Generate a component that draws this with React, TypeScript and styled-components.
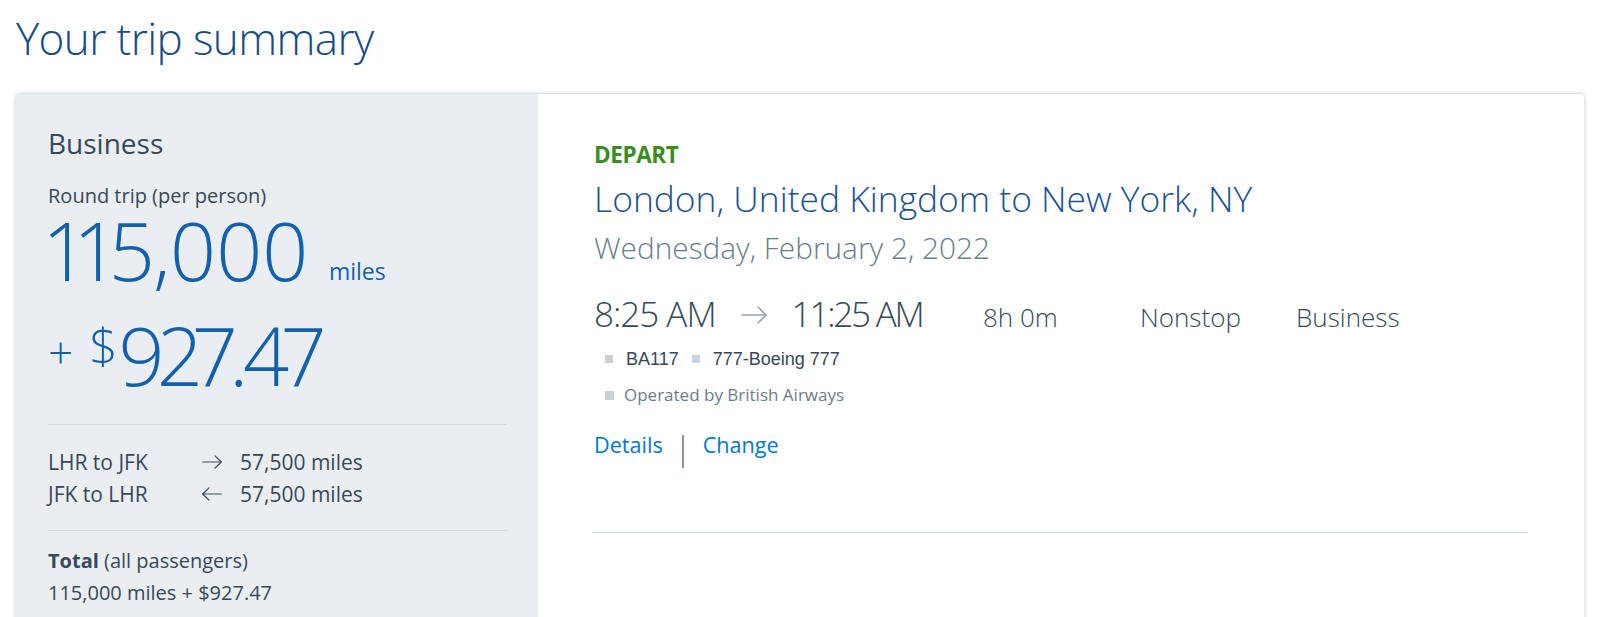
import React from "react";
import styled, { createGlobalStyle } from "styled-components";

const GlobalStyle = createGlobalStyle`
  html, body { margin: 0; padding: 0; background: #ffffff; }
  body { font-family: "Open Sans", "Noto Sans", sans-serif; color: #36495a; }
  * { box-sizing: border-box; }
`;

const Page = styled.main`
  padding: 12px 16px 0;
`;

const Title = styled.h1`
  margin: 0 0 28px;
  font-size: 44px;
  line-height: 1.2;
  font-weight: 300;
  letter-spacing: -0.6px;
  color: #174b86;
`;

const Card = styled.section`
  display: grid;
  grid-template-columns: 522px 1fr;
  border-radius: 4px;
  border-top: 1px solid #dde3e8;
  box-shadow: 0 1px 4px rgba(30, 45, 60, 0.28);
  overflow: hidden;
`;

const FareColumn = styled.aside`
  background: #eaeef1;
  padding: 33px 31px 48px 32px;
  display: flex;
  flex-direction: column;
`;

const CabinName = styled.div`
  font-size: 28px;
  line-height: 1.2;
  font-weight: 400;
  color: #36495a;
`;

const FareLabel = styled.div`
  margin-top: 25px;
  font-size: 20px;
  line-height: 22px;
  color: #36495a;
`;

const AmountLine = styled.div<{ $top: number }>`
  display: flex;
  align-items: flex-start;
  margin-top: ${(p) => p.$top}px;
`;

const BigAmount = styled.span<{ $spacing: number }>`
  font-size: 81px;
  line-height: 81px;
  font-weight: 300;
  letter-spacing: ${(p) => p.$spacing}px;
  font-variant-numeric: proportional-nums;
  color: #1260b0;
`;

const Unit = styled.span`
  font-size: 23px;
  line-height: 1;
  margin: 51px 0 0 21px;
  color: #1260b0;
`;

const Plus = styled.span`
  font-size: 44px;
  line-height: 44px;
  font-weight: 300;
  color: #1260b0;
  margin: 16px 16px 0 0;
`;

const Currency = styled.span`
  font-size: 50px;
  line-height: 50px;
  font-weight: 300;
  color: #1260b0;
  margin: 6px 1px 0 0;
`;

const Rule = styled.hr<{ $top: number }>`
  border: 0;
  height: 1px;
  background: #d0d9df;
  margin: ${(p) => p.$top}px 0 0;
`;

const LegGrid = styled.div`
  display: grid;
  grid-template-columns: 154px 38px auto;
  align-items: center;
  margin-top: 21px;
  font-size: 21px;
  line-height: 32px;
  color: #36495a;
`;

const LegArrow = styled.svg`
  width: 20px;
  height: 14px;
  display: block;
`;

const TotalBlock = styled.div`
  margin-top: 14px;
  font-size: 20px;
  line-height: 32px;
  color: #36495a;
  b { font-weight: 700; }
`;

const FlightColumn = styled.div`
  padding: 47px 56px 40px;
  display: flex;
  flex-direction: column;
`;

const Direction = styled.div`
  font-size: 22.5px;
  line-height: 1.2;
  font-weight: 700;
  letter-spacing: -0.4px;
  color: #3b8c21;
`;

const Route = styled.div`
  margin-top: 9px;
  font-size: 35.4px;
  line-height: 1.2;
  font-weight: 300;
  color: #1b5390;
`;

const DateLine = styled.div`
  margin-top: 11px;
  font-size: 29.8px;
  line-height: 1.2;
  font-weight: 300;
  color: #6b7d8b;
`;

const TimesGrid = styled.div`
  margin-top: 27px;
  display: grid;
  grid-template-columns: 389px 157px 156px auto;
  align-items: baseline;
`;

const TimesCell = styled.div`
  display: flex;
  align-items: center;
  gap: 25px;
`;

const Time = styled.span<{ $spacing: number }>`
  font-size: 35px;
  line-height: 1.2;
  font-weight: 300;
  letter-spacing: ${(p) => p.$spacing}px;
  color: #36495a;
`;

const TimeArrow = styled.svg`
  width: 26px;
  height: 18px;
  display: block;
  margin-top: 2px;
`;

const Meta = styled.span`
  font-size: 26px;
  font-weight: 300;
  color: #36495a;
`;

const InfoLine = styled.div<{ $top: number; $gap: number }>`
  margin-top: ${(p) => p.$top}px;
  padding-left: 11px;
  display: flex;
  align-items: center;
  gap: ${(p) => p.$gap}px;
  line-height: 24px;
`;

const Square = styled.span<{ $size: number }>`
  width: ${(p) => p.$size}px;
  height: ${(p) => p.$size}px;
  background: #c9d1d7;
  flex: none;
`;

const InfoText = styled.span<{ $muted?: boolean }>`
  font-family: ${(p) =>
    p.$muted ? `"Open Sans", sans-serif` : `"Liberation Sans", Arial, sans-serif`};
  font-size: ${(p) => (p.$muted ? 17 : 18)}px;
  color: ${(p) => (p.$muted ? "#6b7d8b" : "#36495a")};
`;

const Links = styled.div`
  margin-top: 25px;
  display: flex;
  align-items: flex-start;
  gap: 19px;
`;

const LinkText = styled.a`
  font-size: 21.6px;
  line-height: 1.2;
  color: #0078d2;
  text-decoration: none;
`;

const LinkBar = styled.span`
  width: 2px;
  height: 33px;
  margin-top: 3px;
  background: #8d979f;
`;

const BottomRule = styled.hr`
  border: 0;
  height: 1px;
  background: #d0d9df;
  margin: 64px 0 0 -2px;
`;

const Arrow = ({ dir, as: C, color }: { dir: "left" | "right"; as: typeof LegArrow; color: string }) => {
  const right = dir === "right";
  return (
    <C viewBox="0 0 26 18" fill="none" stroke={color} strokeWidth={1.6} strokeLinecap="round" strokeLinejoin="round">
      <path d="M1 9h24" />
      {right ? <path d="M17 1l8 8-8 8" /> : <path d="M9 1L1 9l8 8" />}
    </C>
  );
};

const legs = [
  { label: "LHR to JFK", dir: "right" as const, miles: "57,500 miles" },
  { label: "JFK to LHR", dir: "left" as const, miles: "57,500 miles" },
];

export default function App() {
  return (
    <>
      <GlobalStyle />
      <Page>
        <Title>Your trip summary</Title>
        <Card>
          <FareColumn>
            <CabinName>Business</CabinName>
            <FareLabel>Round trip (per person)</FareLabel>
            <AmountLine $top={2}>
              <BigAmount $spacing={-0.8}>115,000</BigAmount>
              <Unit>miles</Unit>
            </AmountLine>
            <AmountLine $top={24}>
              <Plus>+</Plus>
              <Currency>$</Currency>
              <BigAmount $spacing={-6.3}>927.47</BigAmount>
            </AmountLine>
            <Rule $top={29} />
            <LegGrid>
              {legs.map((l) => (
                <React.Fragment key={l.label}>
                  <span>{l.label}</span>
                  <Arrow dir={l.dir} as={LegArrow} color="#36495a" />
                  <span>{l.miles}</span>
                </React.Fragment>
              ))}
            </LegGrid>
            <Rule $top={20} />
            <TotalBlock>
              <div>
                <b>Total</b> (all passengers)
              </div>
              <div>115,000 miles + $927.47</div>
            </TotalBlock>
          </FareColumn>
          <FlightColumn>
            <Direction>DEPART</Direction>
            <Route>London, United Kingdom to New York, NY</Route>
            <DateLine>Wednesday, February 2, 2022</DateLine>
            <TimesGrid>
              <TimesCell>
                <Time $spacing={-1}>8:25 AM</Time>
                <Arrow dir="right" as={TimeArrow} color="#9aa4ab" />
                <Time $spacing={-2.2}>11:25 AM</Time>
              </TimesCell>
              <Meta>8h 0m</Meta>
              <Meta>Nonstop</Meta>
              <Meta>Business</Meta>
            </TimesGrid>
            <InfoLine $top={12} $gap={13}>
              <Square $size={8} />
              <InfoText>BA117</InfoText>
              <Square $size={8} />
              <InfoText>777-Boeing 777</InfoText>
            </InfoLine>
            <InfoLine $top={12} $gap={10}>
              <Square $size={9} />
              <InfoText $muted>Operated by British Airways</InfoText>
            </InfoLine>
            <Links>
              <LinkText href="#">Details</LinkText>
              <LinkBar />
              <LinkText href="#">Change</LinkText>
            </Links>
            <BottomRule />
          </FlightColumn>
        </Card>
      </Page>
    </>
  );
}
